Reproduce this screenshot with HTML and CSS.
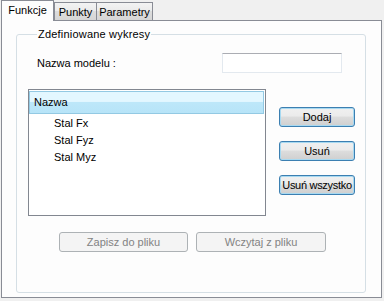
FILE: index.html
```html
<!DOCTYPE html>
<html lang="pl">
<head>
  <meta charset="UTF-8">
  <title>Funkcje</title>
  <link rel="stylesheet" href="styles.css">
</head>
<body>
  <div class="tabs">
    <div class="tab active tab-funkcje">Funkcje</div>
    <div class="tab tab-punkty">Punkty</div>
    <div class="tab tab-parametry">Parametry</div>
  </div>
  <div class="tab-page">
    <fieldset class="group">
      <legend>Zdefiniowane wykresy</legend>
      <div class="model-row">
        <label for="modelName">Nazwa modelu :</label>
        <input type="text" id="modelName">
      </div>
      <div class="main-row">
        <div class="list">
          <div class="list-header">Nazwa</div>
          <div class="list-item">Stal Fx</div>
          <div class="list-item">Stal Fyz</div>
          <div class="list-item">Stal Myz</div>
        </div>
        <div class="actions">
          <button class="btn">Dodaj</button>
          <button class="btn">Usuń</button>
          <button class="btn btn-wide">Usuń wszystko</button>
        </div>
      </div>
      <div class="file-row">
        <button class="btn-disabled" disabled>Zapisz do pliku</button>
        <button class="btn-disabled" disabled>Wczytaj z pliku</button>
      </div>
    </fieldset>
  </div>
</body>
</html>
```

FILE: styles.css
```css
body {
  font-family: 'Liberation Sans', Arial, sans-serif;
  font-size: 11px;
  margin: 0;
  padding: 0;
  background-color: #f0f0f0;
  color: #000;
}
.tabs {
  display: flex;
  align-items: flex-end;
  height: 20px;
  margin-left: 1px;
}
.tab {
  box-sizing: border-box;
  height: 18px;
  text-align: center;
  line-height: 18px;
  border: 1px solid #898c95;
  border-bottom: none;
  background: linear-gradient(#f3f3f3 0%, #ebebeb 45%, #dcdcdc 50%, #d6d6d6 100%);
}
.tab-funkcje {
  width: 53px;
}
.tab-punkty {
  width: 43px;
  margin-left: 0;
}
.tab-parametry {
  width: 57px;
  margin-left: -1px;
}
.tab.active {
  height: 21px;
  margin-bottom: -1px;
  line-height: 19px;
  background: #fdfdfd;
  position: relative;
  z-index: 1;
}
.tab-page {
  box-sizing: border-box;
  margin-left: 1px;
  width: 381px;
  height: 278px;
  border: 1px solid #898c95;
  background: #fdfdfd;
  padding-top: 7px;
  padding-left: 14px;
}
.group {
  box-sizing: border-box;
  width: 350px;
  height: 265px;
  margin: 0;
  padding: 0 10px 0 11px;
  border: 1px solid #d5dfe5;
  border-radius: 3px;
}
.group legend {
  margin-left: 9px;
  padding: 0 1px;
  line-height: 13px;
  letter-spacing: 0.2px;
}
.model-row {
  display: flex;
  align-items: center;
  margin-top: 12px;
  padding-right: 13px;
}
.model-row label {
  margin-left: 9px;
}
.model-row input {
  margin-left: auto;
  box-sizing: border-box;
  width: 120px;
  height: 20px;
  border: 1px solid #e3e9ef;
  border-top-color: #abadb3;
  background: #fff;
  padding: 0 3px;
  font: inherit;
  outline: none;
}
.main-row {
  display: flex;
  margin-top: 16px;
}
.list {
  box-sizing: border-box;
  width: 238px;
  height: 127px;
  border: 1px solid #828790;
  background: #fff;
}
.list-header {
  box-sizing: border-box;
  height: 23px;
  margin: 1px 1px 1px 0;
  padding-left: 4px;
  line-height: 21px;
  border: 1px solid #93c9e3;
  background: linear-gradient(#e3f7ff 0%, #e3f7ff 45%, #bde7f9 50%, #b7e4f8 100%);
}
.list-item {
  height: 17px;
  line-height: 17px;
  padding-left: 25px;
}
.actions {
  display: flex;
  flex-direction: column;
  gap: 14px;
  margin-left: 13px;
  padding-top: 18px;
}
.btn,
.btn-disabled {
  box-sizing: border-box;
  height: 20px;
  padding: 0;
  font: inherit;
  border-radius: 3px;
  white-space: nowrap;
}
.btn {
  width: 76px;
  color: #000;
  border: 1px solid #3c7fb1;
  box-shadow: inset 0 0 0 1px #a7d9f1;
  background: linear-gradient(#f0f0f0 0%, #ebebeb 45%, #dddddd 50%, #cfcfcf 100%);
}
.btn-wide {
  letter-spacing: -0.3px;
}
.file-row {
  display: flex;
  gap: 8px;
  margin-top: 16px;
  padding-left: 31px;
}
.btn-disabled {
  width: 129px;
  color: #838383;
  border: 1px solid #adb2b5;
  background: #f4f4f4;
}
.btn-disabled + .btn-disabled {
  width: 130px;
}
```
